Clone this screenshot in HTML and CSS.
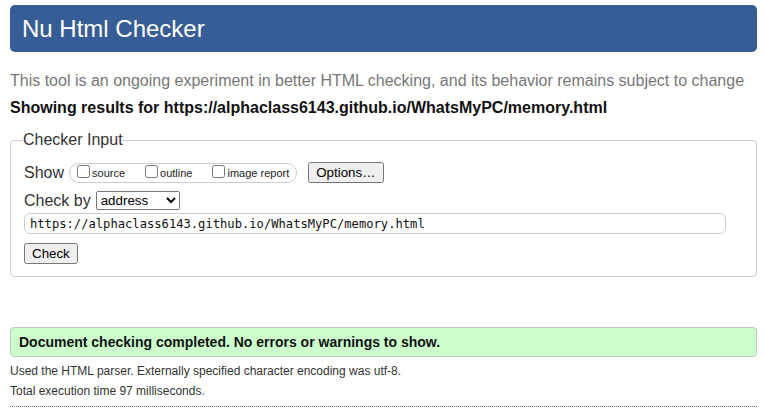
FILE: index.html
```html
<!DOCTYPE html>
<html lang="en">
<head>
<meta charset="utf-8">
<title>Nu Html Checker</title>
<link rel="stylesheet" href="styles.css">
</head>
<body>
<div class="page">
  <h1 class="banner">Nu Html Checker</h1>
  <p class="intro">This tool is an ongoing experiment in better HTML checking, and its behavior remains subject to change</p>
  <p class="showing">Showing results for https://alphaclass6143.github.io/WhatsMyPC/memory.html</p>
  <form class="form">
    <fieldset class="checker">
      <legend class="legend">Checker Input</legend>
      <div class="row row-show">
        <span class="lbl">Show</span>
        <div class="pill">
          <label class="opt"><input class="cb" type="checkbox"><span>source</span></label>
          <label class="opt"><input class="cb" type="checkbox"><span>outline</span></label>
          <label class="opt"><input class="cb" type="checkbox"><span>image report</span></label>
        </div>
        <button class="btn btn-options" type="button">Options…</button>
      </div>
      <div class="row row-by">
        <span class="lbl">Check by</span>
        <select class="sel"><option>address</option></select>
      </div>
      <div class="row row-url">
        <input class="url" type="text" value="https://alphaclass6143.github.io/WhatsMyPC/memory.html">
      </div>
      <div class="row row-submit">
        <button class="btn" type="button">Check</button>
      </div>
    </fieldset>
  </form>
  <p class="success">Document checking completed. No errors or warnings to show.</p>
  <p class="details">Used the HTML parser. Externally specified character encoding was utf-8.</p>
  <p class="details">Total execution time 97 milliseconds.</p>
  <div class="dots"></div>
</div>
</body>
</html>
```

FILE: styles.css
```css
html, body {
  margin: 0;
  padding: 0;
  background: #fff;
}
body {
  font-family: "Liberation Sans", Arial, sans-serif;
  color: #222;
}
.page {
  padding: 5px 7px 0 10px;
}
.banner {
  margin: 0;
  height: 47px;
  line-height: 47px;
  padding-left: 12px;
  background: #365d95;
  color: #fff;
  font-size: 24px;
  font-weight: normal;
  border-radius: 5px;
}
.intro {
  margin: 19px 0 0;
  font-size: 16px;
  line-height: 20px;
  color: #777;
}
.showing {
  margin: 7px 0 0;
  font-size: 16px;
  line-height: 20px;
  font-weight: bold;
  color: #111;
}
.form {
  margin: 12px 0 0;
}
.checker {
  margin: 0;
  padding: 12px 13px 12px 13px;
  border: 1px solid #ccc;
  border-radius: 4px;
  display: flex;
  flex-direction: column;
  align-items: flex-start;
}
.legend {
  padding: 0;
  margin-left: -1px;
  font-size: 16px;
  line-height: 20px;
  color: #333;
}
.row {
  display: flex;
  align-items: center;
}
.row-show {
  height: 21px;
}
.lbl {
  font-size: 16px;
  line-height: 18px;
  color: #333;
}
.row-show .lbl {
  margin-right: 5px;
}
.pill {
  display: flex;
  align-items: flex-start;
  box-sizing: border-box;
  height: 20px;
  padding: 1px 7px 0 7px;
  border: 1px solid #ccc;
  border-radius: 10px;
}
.opt {
  display: flex;
  align-items: flex-end;
  margin-right: 20px;
  font-size: 11px;
  line-height: 13px;
  color: #222;
}
.opt:last-child {
  margin-right: 0;
}
.opt span {
  position: relative;
  top: 2px;
}
.cb {
  margin: 0 2px 0 0;
  width: 13px;
  height: 13px;
}
.btn {
  font-family: "Liberation Sans", Arial, sans-serif;
  font-size: 13.33px;
  height: 21px;
  box-sizing: border-box;
  padding: 0 6px;
  color: #000;
}
.btn-options {
  margin-left: 11px;
}
.row-by {
  margin-top: 8px;
  height: 19px;
}
.row-by .lbl {
  margin-right: 5px;
}
.sel {
  font-family: "Liberation Sans", Arial, sans-serif;
  font-size: 13.33px;
  width: 84px;
  height: 19px;
  box-sizing: border-box;
  color: #000;
}
.row-url {
  margin-top: 3px;
}
.url {
  box-sizing: border-box;
  width: 702px;
  height: 21px;
  margin: 0;
  padding: 0 5px;
  border: 1px solid #ccc;
  border-radius: 6px;
  font-family: "DejaVu Sans Mono", "Liberation Mono", monospace;
  font-size: 12.15px;
  color: #111;
  outline: none;
}
.row-submit {
  margin-top: 9px;
}
.success {
  margin: 50px 0 0;
  box-sizing: border-box;
  height: 30px;
  line-height: 28px;
  padding-left: 8px;
  background: #ccffcc;
  border: 1px solid #c4c4c4;
  border-radius: 4px;
  font-size: 14px;
  font-weight: bold;
  color: #111;
}
.details {
  margin: 0;
  font-size: 12px;
  line-height: 20px;
  color: #333;
}
.success + .details {
  margin-top: 4px;
}
.dots {
  margin-top: 5px;
  border-top: 1px dotted #666;
}
```
